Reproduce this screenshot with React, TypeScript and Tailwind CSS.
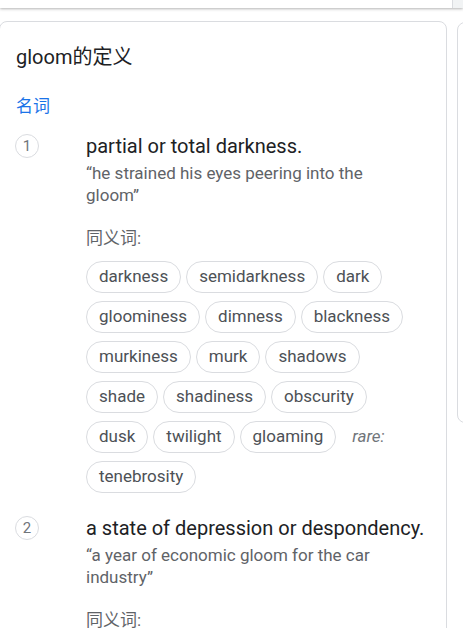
const senses = [
  {
    n: 1,
    def: "partial or total darkness.",
    example: "“he strained his eyes peering into the gloom”",
    rows: [
      ["darkness", "semidarkness", "dark"],
      ["gloominess", "dimness", "blackness"],
      ["murkiness", "murk", "shadows"],
      ["shade", "shadiness", "obscurity"],
      ["dusk", "twilight", "gloaming"],
      ["tenebrosity"],
    ],
  },
  {
    n: 2,
    def: "a state of depression or despondency.",
    example: "“a year of economic gloom for the car industry”",
    rows: [],
  },
];

const Chip = ({ label }: { label: string }) => (
  <span className="h-8 px-3 flex items-center rounded-full border border-[#dadce0] text-[17px] text-[#4d5156] whitespace-nowrap">
    {label}
  </span>
);

const Sense = ({ s }: { s: (typeof senses)[number] }) => (
  <div className="flex">
    <div className="w-[70px] shrink-0">
      <div className="w-6 h-6 -ml-px rounded-full border border-[#dadce0] flex items-center justify-center text-[15px] text-[#70757a]">
        {s.n}
      </div>
    </div>
    <div className="flex flex-col">
      <div className="text-[20px] leading-6 text-[#202124] whitespace-nowrap">{s.def}</div>
      <div className="mt-1 max-w-[320px] text-[17px] leading-[22px] text-[#5f6368]">{s.example}</div>
      <div className="mt-5 text-[17px] leading-6 text-[#5f6368]">同义词:</div>
      {s.rows.length > 0 && (
        <div className="mt-[11px] flex flex-col gap-2">
          {s.rows.map((row, i) => (
            <div key={i} className="flex gap-[5px] items-center">
              {row.map((w) => (
                <Chip key={w} label={w} />
              ))}
              {s.n === 1 && i === 4 && (
                <span className="ml-[11px] italic text-[17px] text-[#70757a]">rare:</span>
              )}
            </div>
          ))}
        </div>
      )}
    </div>
  </div>
);

export default function App() {
  return (
    <div className="w-[463px] h-[628px] overflow-hidden bg-white font-[Roboto,'Noto_Sans_CJK_SC',sans-serif]">
      <div className="h-2 flex shadow-[0_1px_3px_rgba(0,0,0,0.3)] relative">
        <div className="w-[452px] bg-white" />
        <div className="flex-1 bg-[#f1f3f4] border-l border-[#dadce0]" />
      </div>
      <div className="flex mt-[13px]">
        <div className="w-[448px] -ml-px shrink-0 h-[700px] border border-[#dadce0] rounded-lg pl-[16px] pr-[22px]">
          <div className="pt-[21px] text-[20px] leading-7 text-[#202124]">gloom的定义</div>
          <div className="mt-[23px] text-[17px] leading-6 text-[#1a73e8]">名词</div>
          <div className="mt-4 flex flex-col gap-[23px]">
            {senses.map((s) => (
              <Sense key={s.n} s={s} />
            ))}
          </div>
        </div>
        <div className="ml-[10px] w-[40px] shrink-0 h-[401px] mt-px border border-[#dadce0] rounded-lg" />
      </div>
    </div>
  );
}
